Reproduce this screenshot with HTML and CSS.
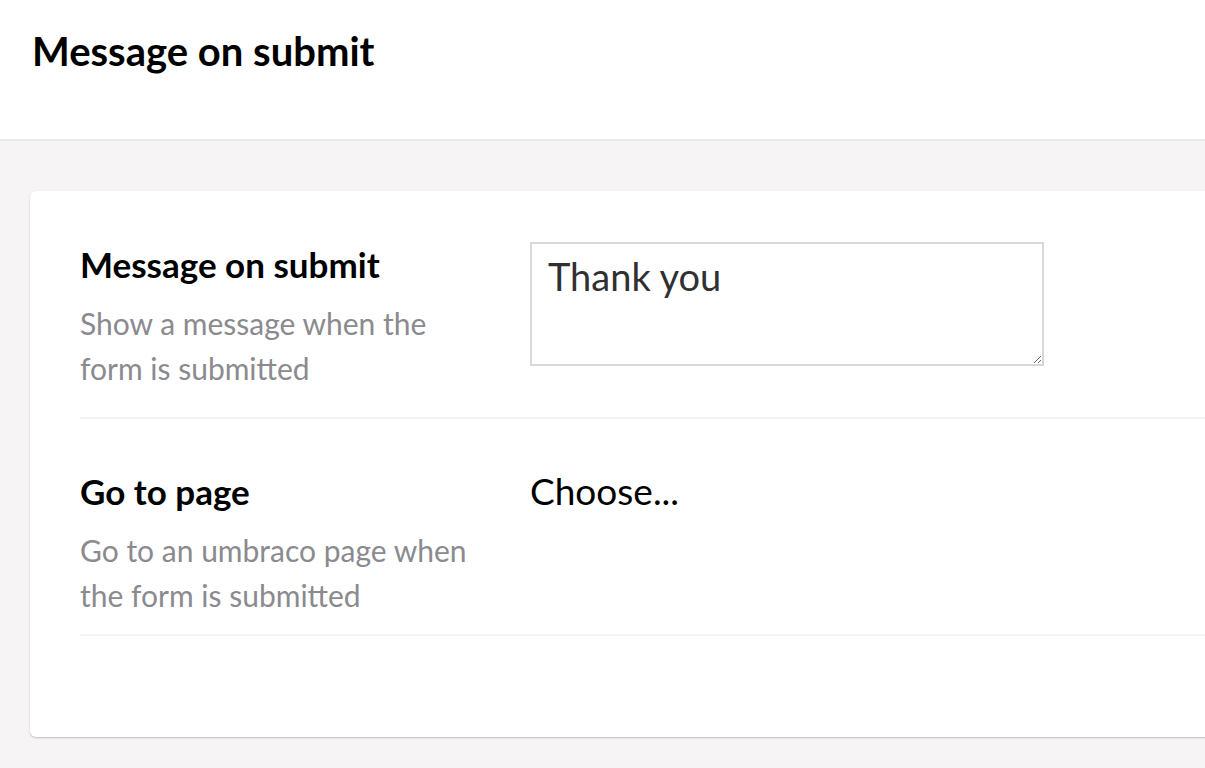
FILE: index.html
```html
<!DOCTYPE html>
<html>
<head>
<meta charset="utf-8">
<link rel="stylesheet" href="styles.css">
</head>
<body>
<header class="editor-header">
  <h1 class="editor-title">Message on submit</h1>
</header>
<main class="editor-body">
  <section class="card">
    <div class="prop-row prop-row--tall">
      <div class="prop-label">
        <div class="label-title">Message on submit</div>
        <div class="label-desc">Show a message when the form is submitted</div>
      </div>
      <div class="prop-control">
        <textarea class="msg-input">Thank you</textarea>
      </div>
    </div>
    <div class="prop-row">
      <div class="prop-label">
        <div class="label-title">Go to page</div>
        <div class="label-desc">Go to an umbraco page when the form is submitted</div>
      </div>
      <div class="prop-control">
        <div class="choose">Choose...</div>
      </div>
    </div>
  </section>
</main>
</body>
</html>
```
FILE: styles.css
```css
html, body {
  margin: 0;
  padding: 0;
  height: 100%;
  overflow: hidden;
}
body {
  font-family: Lato, "Open Sans", sans-serif;
  background: #f6f4f4;
  color: #000;
}
.editor-header {
  background: #fff;
  height: 139px;
  border-bottom: 2px solid #e9e9eb;
  display: flex;
  align-items: flex-start;
  padding-left: 32px;
}
.editor-title {
  margin: 0;
  padding-top: 27px;
  font-size: 40px;
  font-weight: 700;
  line-height: 48px;
}
.editor-body {
  padding: 50px 0 0 30px;
}
.card {
  background: #fff;
  border-radius: 6px;
  box-shadow: 0 1px 2px rgba(0,0,0,0.22);
  width: 1200px;
  height: 546px;
  padding: 50px 0 0 50px;
  box-sizing: border-box;
}
.prop-row {
  display: flex;
  border-bottom: 2px solid #f3f3f4;
  padding-bottom: 16px;
  margin-bottom: 49px;
}
.prop-row--tall {
  padding-bottom: 26px;
}
.prop-label {
  width: 450px;
  flex: none;
  padding-top: 2px;
}
.label-title {
  font-size: 35px;
  font-weight: 700;
  line-height: 42px;
}
.label-desc {
  font-size: 30px;
  line-height: 45px;
  color: #8a8a8f;
  width: 395px;
  margin-top: 16px;
}
.prop-control {
  padding-top: 1px;
}
.msg-input {
  width: 514px;
  height: 124px;
  box-sizing: border-box;
  border: 2px solid #d8d7d9;
  font-family: Lato, sans-serif;
  font-size: 38px;
  color: #303033;
  padding: 9px 16px;
  resize: vertical;
  margin: 0;
  display: block;
  outline: none;
}
.choose {
  font-size: 37px;
  line-height: 44px;
  color: #000;
}
```
